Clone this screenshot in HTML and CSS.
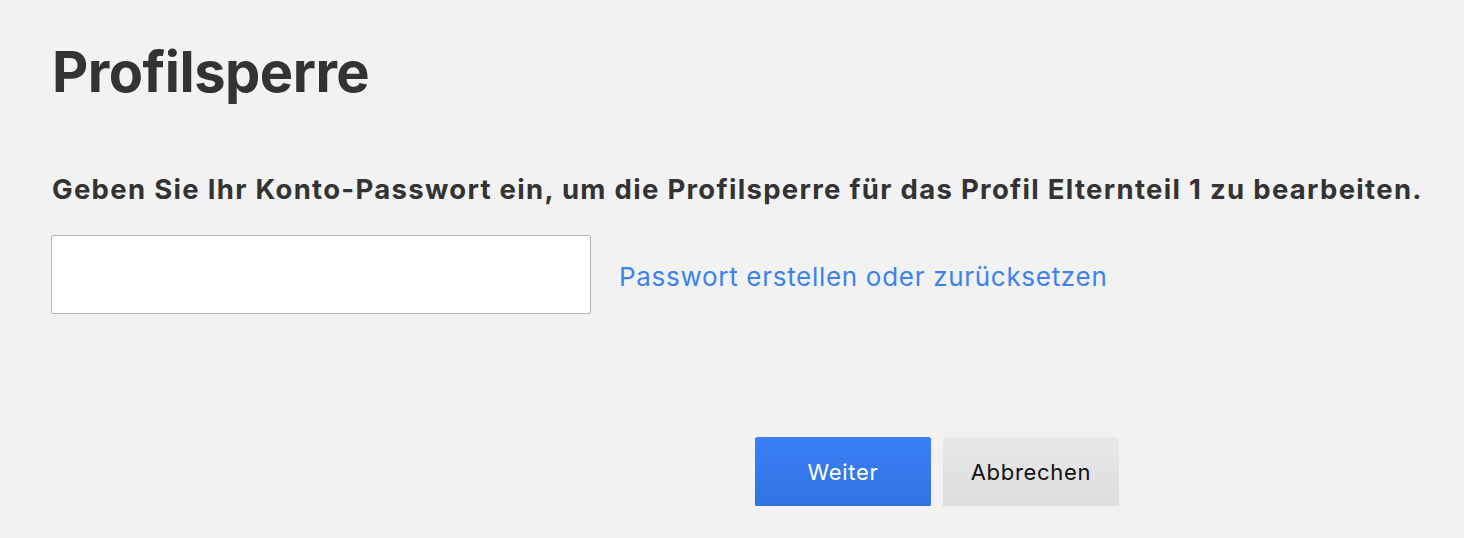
FILE: index.html
```html
<!DOCTYPE html>
<html lang="de">
<head>
    <meta charset="UTF-8">
    <title>Profilsperre</title>
    <link rel="stylesheet" href="styles.css">
</head>
<body>
<div class="page">
    <h1 class="title">Profilsperre</h1>
    <h2 class="lead">Geben Sie Ihr Konto-Passwort ein, um die Profilsperre für das Profil Elternteil 1 zu bearbeiten.</h2>
    <div class="pw-row">
        <input class="pw-input" type="password">
        <a class="pw-link" href="#">Passwort erstellen oder zurücksetzen</a>
    </div>
    <div class="actions">
        <button class="btn btn-primary">Weiter</button>
        <button class="btn btn-grey">Abbrechen</button>
    </div>
</div>
</body>
</html>
```

FILE: styles.css
```css
body,h1,h2,div{margin:0;padding:0;}
body{background:#f2f2f2;font-family:Inter,"Noto Sans",sans-serif;color:#333;}
.page{padding:36px 0 0 52px;}
.title{font-size:56px;font-weight:700;line-height:72px;letter-spacing:-0.5px;}
.lead{margin-top:65px;font-size:27.5px;font-weight:700;line-height:32px;letter-spacing:1.3px;white-space:nowrap;}
.pw-row{display:flex;align-items:center;margin-top:30px;margin-left:-1px;}
.pw-input{box-sizing:border-box;width:540px;height:79px;border:1px solid #b3b3b3;border-radius:2px;background:#fff;outline:none;}
.pw-link{margin-left:28px;padding-top:3px;font-size:26px;letter-spacing:0.7px;color:#3b82f0;text-decoration:none;}
.actions{display:flex;gap:12px;margin-top:123px;margin-left:703px;}
.btn{box-sizing:border-box;width:176px;height:69px;border:none;border-radius:2px;font-family:Inter,"Noto Sans",sans-serif;font-size:22px;letter-spacing:0.7px;cursor:pointer;}
.btn-primary{background:linear-gradient(#3b80f5,#2f73e3);color:#fff;box-shadow:0 2px 0 #6b6b6b;}
.btn-grey{background:linear-gradient(#e8e8e8,#dedede);color:#111;box-shadow:0 2px 0 #b8b8b8;}
```
